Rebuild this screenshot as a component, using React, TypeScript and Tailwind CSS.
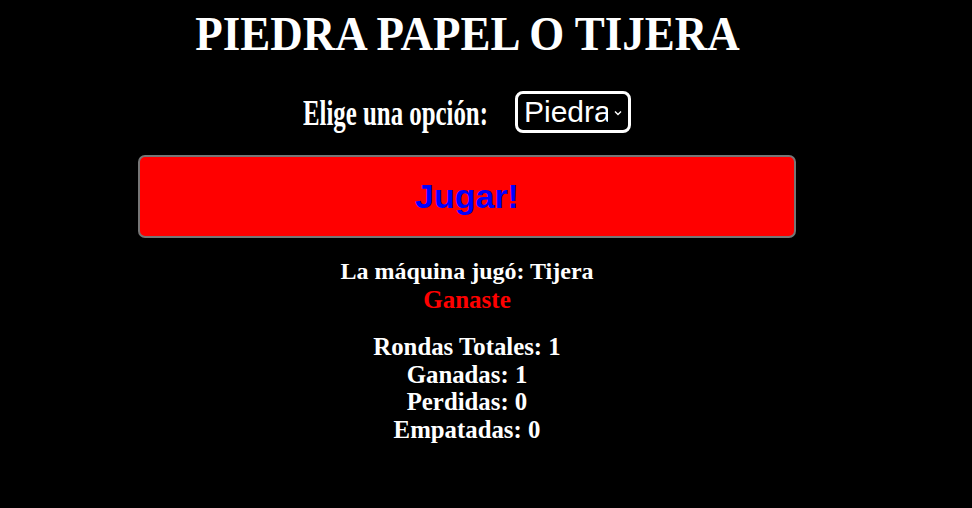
import React, { useState } from "react";

type Score = { total: number; won: number; lost: number; tied: number };

export default function App() {
  const [choice, setChoice] = useState("Piedra");
  const [machine] = useState("Tijera");
  const [score] = useState<Score>({ total: 1, won: 1, lost: 0, tied: 0 });

  return (
    <main className="bg-black text-white min-h-[508px] w-full font-['Liberation_Serif',serif]">
      <div className="w-[934px] flex flex-col items-center">
        {/* TITLE */}
        <h1 className="mt-[7px] w-full flex justify-center text-[48px] font-bold leading-[53px]">
          <span className="whitespace-nowrap scale-x-[0.937] origin-center">PIEDRA PAPEL O TIJERA</span>
        </h1>

        {/* SELECTOR */}
        <div className="mt-[31px] flex items-center gap-[27px]">
          <label className="w-[185px] h-[41px] flex items-center text-[36px] font-bold leading-none">
            <span className="whitespace-nowrap scale-x-[0.69] origin-left mt-[2px]">Elige una opción:</span>
          </label>
          <div className="relative w-[116px] h-[42px]">
            <select
              value={choice}
              onChange={(e) => setChoice(e.target.value)}
              className="appearance-none w-full h-full bg-black text-white border-[3px] border-white rounded-[8px] pl-[6px] pr-[20px] text-[30px] leading-none font-['Liberation_Sans',sans-serif] outline-none"
            >
              <option>Piedra</option>
              <option>Papel</option>
              <option>Tijera</option>
            </select>
            <svg
              className="absolute left-[99px] top-[19px] pointer-events-none"
              width="8"
              height="6"
              viewBox="0 0 8 6"
              fill="none"
            >
              <path d="M1 1.5L4 4.5L7 1.5" stroke="white" strokeWidth="1.4" />
            </svg>
          </div>
        </div>

        {/* PLAY BUTTON */}
        <button className="mt-[22px] w-[658px] h-[83px] bg-[#ff0000] border-2 border-[#767676] rounded-[7px] text-[#0000ff] text-[34px] font-bold font-['Liberation_Sans',sans-serif] cursor-pointer">
          Jugar!
        </button>

        {/* RESULT */}
        <div className="mt-[20px] text-center text-[24px] font-bold leading-[27.5px]">
          <p>La máquina jugó: {machine}</p>
          <p className="text-[#ff0000] text-[25px]">Ganaste</p>
        </div>

        {/* STATS */}
        <div className="mt-[20px] text-center text-[24.8px] font-bold leading-[27.5px]">
          <p>Rondas Totales: {score.total}</p>
          <p>Ganadas: {score.won}</p>
          <p>Perdidas: {score.lost}</p>
          <p>Empatadas: {score.tied}</p>
        </div>
      </div>
    </main>
  );
}
